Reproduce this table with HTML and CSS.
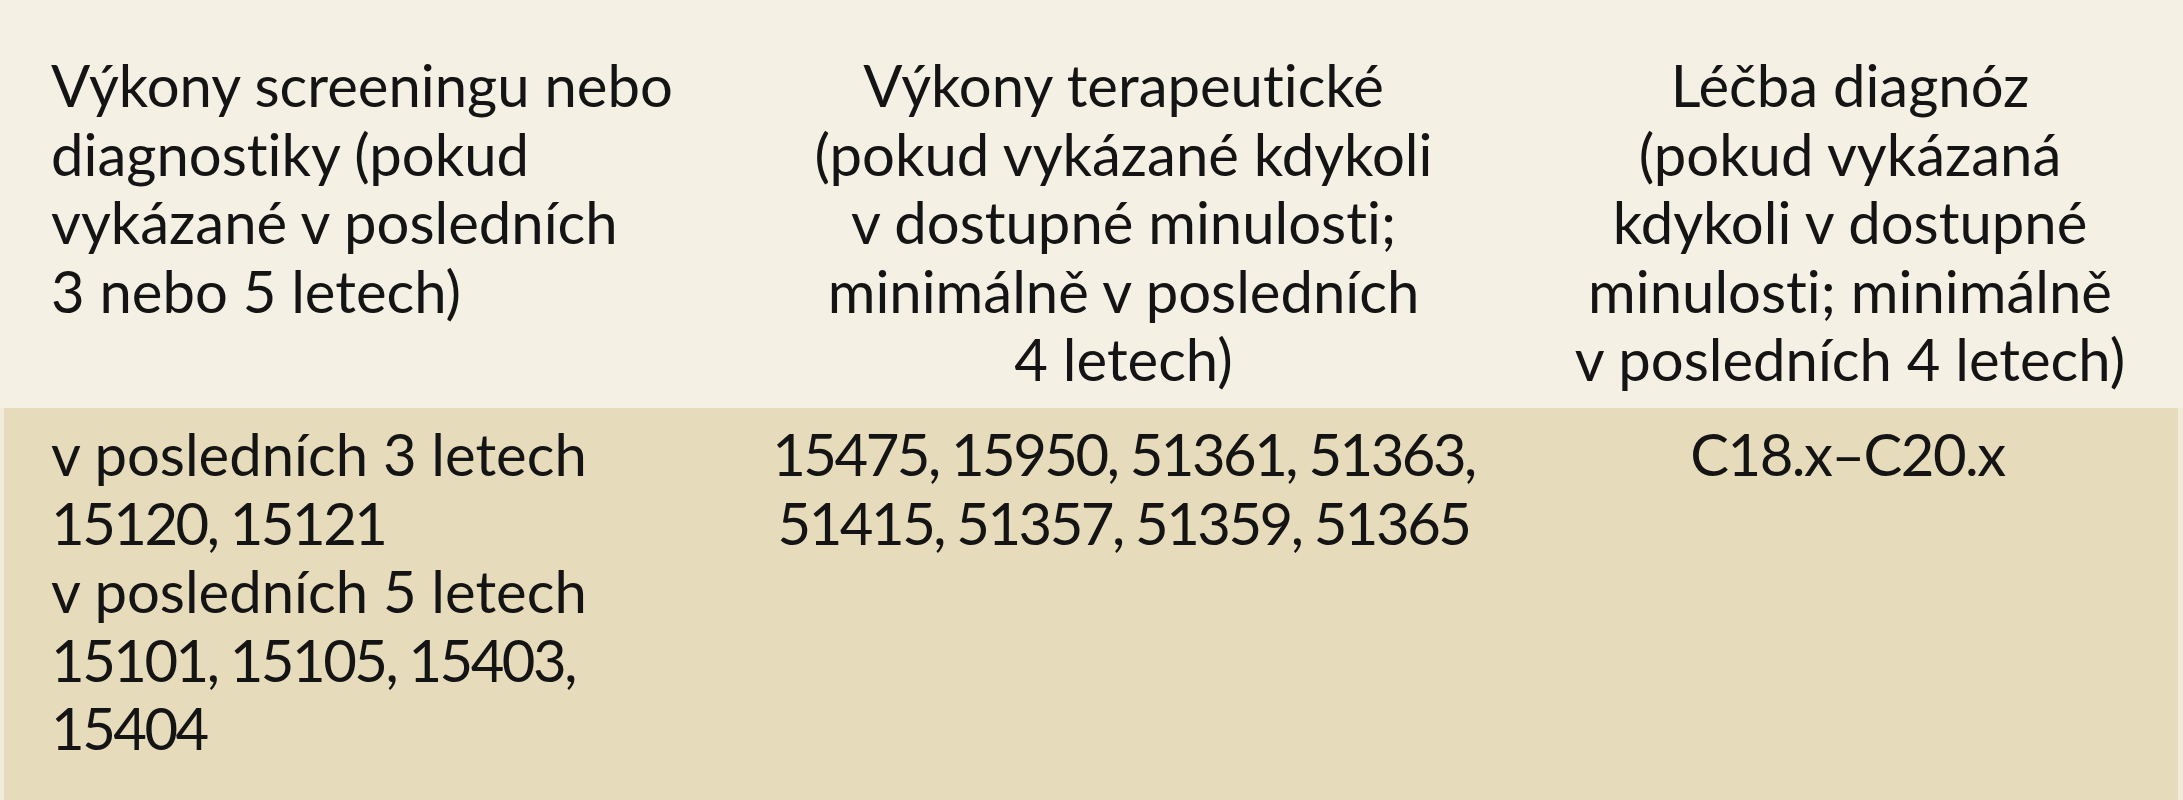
FILE: index.html
```html
<!DOCTYPE html>
<html lang="cs">
<head>
<meta charset="utf-8">
<title>Výkony</title>
<link rel="stylesheet" href="styles.css">
</head>
<body>
<div class="table">
  <div class="cell head first">
    <span class="ln">Výkony screeningu nebo</span>
    <span class="ln">diagnostiky (pokud</span>
    <span class="ln">vykázané v posledních</span>
    <span class="ln">3 nebo 5 letech)</span>
  </div>
  <div class="cell head center">
    <span class="ln">Výkony terapeutické</span>
    <span class="ln">(pokud vykázané kdykoli</span>
    <span class="ln">v dostupné minulosti;</span>
    <span class="ln">minimálně v posledních</span>
    <span class="ln">4 letech)</span>
  </div>
  <div class="cell head center last">
    <span class="ln">Léčba diagnóz</span>
    <span class="ln">(pokud vykázaná</span>
    <span class="ln">kdykoli v dostupné</span>
    <span class="ln">minulosti; minimálně</span>
    <span class="ln">v posledních 4 letech)</span>
  </div>
  <div class="cell body first">
    <span class="ln">v posledních 3 letech</span>
    <span class="ln num">15120, 15121</span>
    <span class="ln">v posledních 5 letech</span>
    <span class="ln num">15101, 15105, 15403,</span>
    <span class="ln num">15404</span>
  </div>
  <div class="cell body center">
    <span class="ln num">15475, 15950, 51361, 51363,</span>
    <span class="ln num">51415, 51357, 51359, 51365</span>
  </div>
  <div class="cell body center last">
    <span class="ln code">C18.x–C20.x</span>
  </div>
</div>
</body>
</html>
```
FILE: styles.css
```css
html, body {
  margin: 0;
  padding: 0;
  background: #f5f0e4;
}
body {
  width: 2183px;
  height: 800px;
  overflow: hidden;
  font-family: Lato, "Liberation Sans", sans-serif;
  font-size: 58px;
  line-height: 68.5px;
  color: #141414;
  font-variant-ligatures: none;
  font-feature-settings: "liga" 0, "clig" 0;
}
.table {
  display: grid;
  grid-template-columns: 730px 787px 666px;
  grid-template-rows: 408px 392px;
}
.cell {
  display: flex;
  flex-direction: column;
}
.ln {
  display: block;
  white-space: nowrap;
}
.num {
  letter-spacing: -2.5px;
}
.code {
  letter-spacing: -1.5px;
}
.head {
  background: #f5f0e4;
  padding-top: 51px;
}
.body {
  background: #e6dbbb;
  padding-top: 12px;
}
.first {
  padding-left: 51px;
  align-items: flex-start;
}
.center {
  align-items: center;
}
.body.first {
  border-left: 4px solid #f1ebda;
  padding-left: 47px;
}
.body.last {
  border-right: 5px solid #f1ebda;
}
```
